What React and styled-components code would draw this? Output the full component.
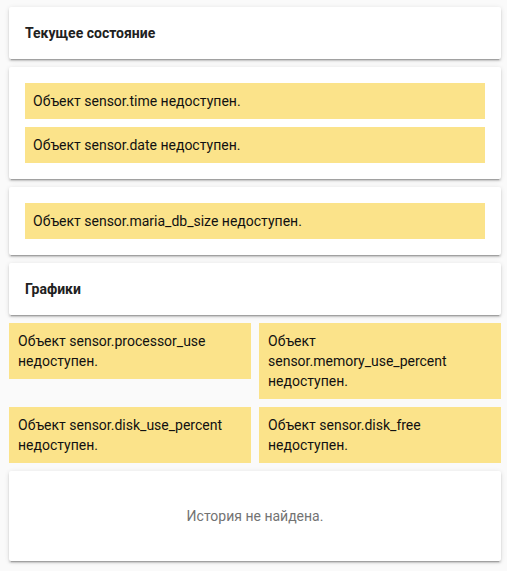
import styled, { createGlobalStyle } from 'styled-components';

const Global=createGlobalStyle`
	html,body{
		margin:0;
		padding:0;
		background:#fafafa;
	}
	body{
		font-family:Roboto,"Noto Sans",sans-serif;
		-webkit-font-smoothing:antialiased;
	}
`

const Page=styled.div`
	display:flex;
	flex-direction:column;
	gap:8px;
	padding:7px 6px 8px 9px;
`

const Card=styled.div`
	background:#fff;
	border-radius:2px;
	box-shadow:0 2px 2px 0 rgba(0,0,0,.14),0 1px 5px 0 rgba(0,0,0,.12),0 3px 1px -2px rgba(0,0,0,.2);
	padding:16px;
	display:flex;
	flex-direction:column;
	gap:8px;
`

const Title=styled.div`
	font-size:14px;
	line-height:20px;
	font-weight:700;
	color:#212121;
`

const Warning=styled.div`
	background:#fbe38a;
	color:#111;
	font-size:14px;
	line-height:20px;
	padding:${p=>p.$tight ? '8px 9px' : '8px'};
	overflow-wrap:break-word;
`

const Grid=styled.div`
	display:grid;
	grid-template-columns:1fr 1fr;
	gap:8px;
	align-items:start;
`

const Row=styled.div`
	display:contents;
`

const Empty=styled(Card)`
	height:90px;
	box-sizing:border-box;
	align-items:center;
	justify-content:center;
	color:#737373;
	font-size:14px;
	line-height:20px;
`

const missing=(id)=>`Объект ${id} недоступен.`

export default function App(){
	const graphs=[
		['sensor.processor_use','sensor.memory_use_percent'],
		['sensor.disk_use_percent','sensor.disk_free'],
	];

	return(
		<>
			<Global />
			<Page>
				<Card>
					<Title>Текущее состояние</Title>
				</Card>

				<Card>
					<Warning>{missing('sensor.time')}</Warning>
					<Warning>{missing('sensor.date')}</Warning>
				</Card>

				<Card>
					<Warning>{missing('sensor.maria_db_size')}</Warning>
				</Card>

				<Card>
					<Title>Графики</Title>
				</Card>

				<Grid>
					{
						graphs.map((pair,index)=>{
							return(
								<Row key={index}>
									{pair.map(id=><Warning key={id} $tight>{missing(id)}</Warning>)}
								</Row>
							)
						})
					}
				</Grid>

				<Empty>История не найдена.</Empty>
			</Page>
		</>
	)
}
